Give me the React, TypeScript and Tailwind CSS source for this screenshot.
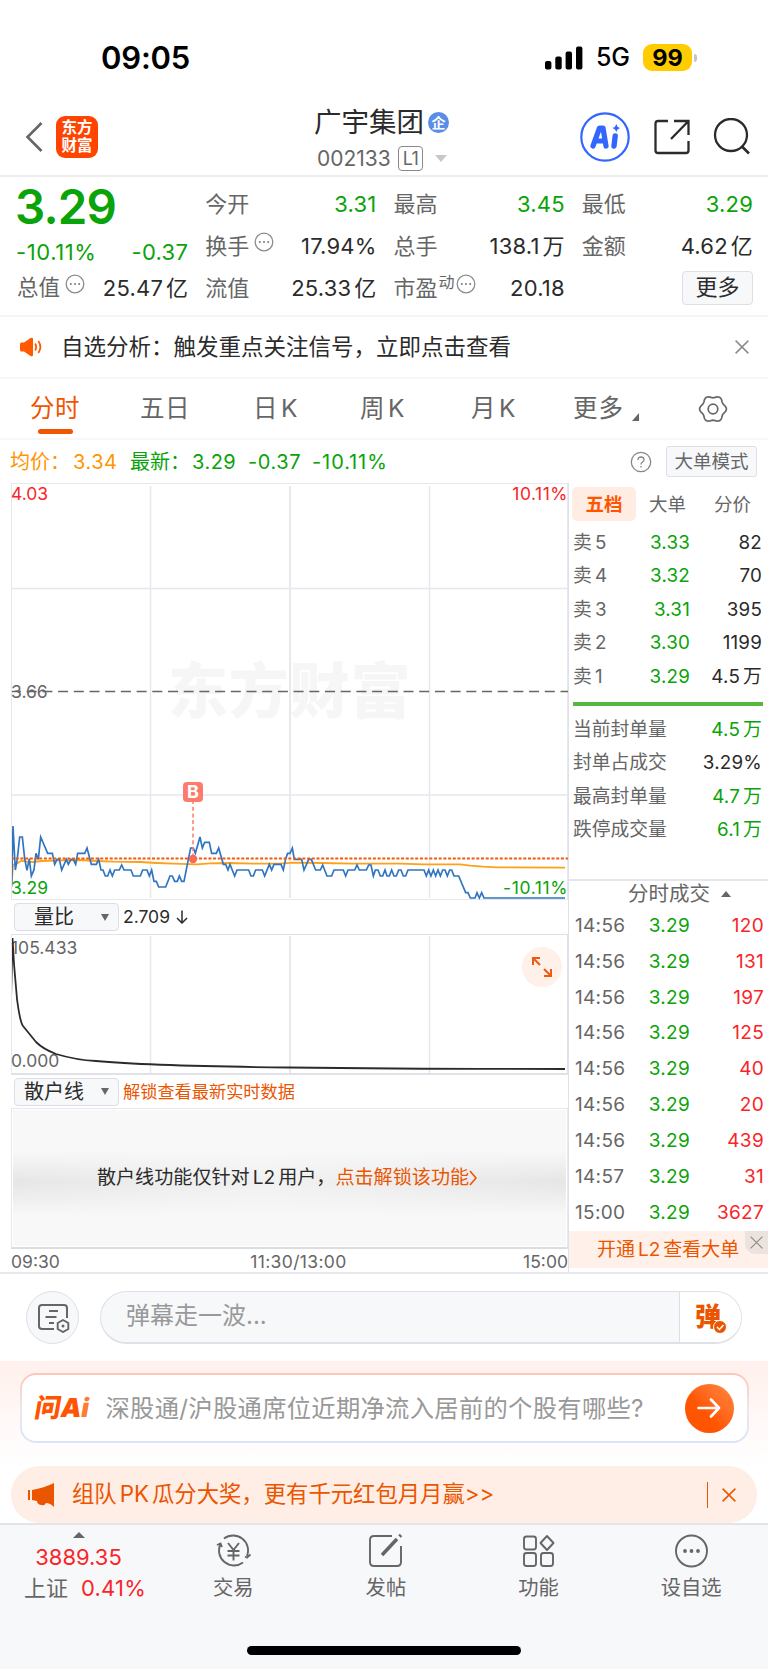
import React from 'react';
import clsx from 'clsx';

const GREEN = 'text-[#0aa30a]';
const RED = 'text-[#f92528]';

const asks = [
  { level: '5', price: '3.33', volume: '82' },
  { level: '4', price: '3.32', volume: '70' },
  { level: '3', price: '3.31', volume: '395' },
  { level: '2', price: '3.30', volume: '1199' },
  { level: '1', price: '3.29', volume: '4.5', unit: '万' },
];

const sealStats = [
  { label: '当前封单量', value: '4.5', unit: '万', green: true },
  { label: '封单占成交', value: '3.29%', green: false },
  { label: '最高封单量', value: '4.7', unit: '万', green: true },
  { label: '跌停成交量', value: '6.1', unit: '万', green: true },
];

const trades = [
  ['14:56', '120'],
  ['14:56', '131'],
  ['14:56', '197'],
  ['14:56', '125'],
  ['14:56', '40'],
  ['14:56', '20'],
  ['14:56', '439'],
  ['14:57', '31'],
  ['15:00', '3627'],
];

const pricePoints =
  '35,350 39,168 46,300 52,266 59,201 67,201 74,266 81,301 88,266 94,318 102,299 108,250 115,268 122,201 143,250 157,250 164,283 171,268 178,268 185,300 199,268 205,283 213,268 220,268 227,283 233,250 254,250 261,234 274,283 289,283 296,268 303,300 309,300 316,318 323,318 330,300 337,318 344,300 358,300 365,285 372,300 393,300 400,318 421,318 428,300 441,300 448,318 455,300 462,334 469,334 476,351 497,351 510,318 517,318 524,334 532,334 538,318 545,334 552,334 565,268 572,234 580,234 586,250 600,201 607,234 614,217 628,217 635,250 649,250 656,234 670,283 677,283 684,300 690,283 704,318 711,300 746,300 753,318 760,318 767,300 787,300 794,318 808,283 815,300 822,283 843,283 850,300 857,266 863,250 870,250 877,234 883,268 905,268 912,300 926,268 934,268 947,300 961,300 968,285 981,318 995,318 1002,300 1030,300 1037,318 1044,300 1064,300 1071,285 1078,300 1099,300 1106,285 1113,285 1120,318 1126,300 1134,300 1141,318 1148,318 1155,300 1161,318 1168,318 1175,300 1182,318 1189,318 1196,300 1203,300 1210,318 1217,318 1224,300 1272,300 1279,318 1286,300 1293,318 1300,300 1307,318 1314,300 1321,318 1328,300 1335,300 1342,318 1349,300 1355,300 1362,318 1376,318 1397,368 1404,368 1411,384 1425,384 1431,368 1438,384 1445,368 1452,384 1695,384';

const averagePoints =
  '35,340 39,285 50,281 58,276 66,272 80,275 100,276 125,273 180,271 240,270 290,273 340,275 420,276 470,279 520,281 590,283 630,280 690,279 760,281 840,281 880,278 960,279 1060,281 1200,281 1270,283 1380,283 1410,287 1450,290 1490,292 1695,293';

// six-lobed outline of the settings icon
const gearPoints = Array.from({ length: 72 }, (_, i) => {
  const angle = (i / 72) * Math.PI * 2;
  const radius = 12.3 + 1.1 * Math.cos(angle * 6);
  return `${(15 + radius * Math.cos(angle)).toFixed(2)},${(15 + radius * Math.sin(angle)).toFixed(2)}`;
}).join(' ');

const Dots: React.FC<{ className?: string }> = ({ className }) => (
  <svg viewBox="0 0 20 20" className={clsx('w-5 h-5', className)} fill="none">
    <circle cx="10" cy="10" r="8.8" stroke="#8c8c8c" strokeWidth="1.3" />
    <g fill="#777">
      <circle cx="5.8" cy="10" r="1" />
      <circle cx="10" cy="10" r="1" />
      <circle cx="14.2" cy="10" r="1" />
    </g>
  </svg>
);

const Cross: React.FC<{ className?: string; width?: number }> = ({ className, width = 1.5 }) => (
  <svg viewBox="0 0 14 14" className={className} fill="none" stroke="currentColor" strokeWidth={width}>
    <path d="M0.6 0.6 13.4 13.4M13.4 0.6 0.6 13.4" />
  </svg>
);

interface QuoteRowProps {
  label: React.ReactNode;
  value: string;
  unit?: string;
  green?: boolean;
}

const QuoteRow: React.FC<QuoteRowProps> = ({ label, value, unit, green }) => (
  <div className="flex h-[42px] items-center justify-between">
    <span className="flex items-center text-[#666]">{label}</span>
    <span className={clsx('flex items-center tracking-[0.2px]', green ? GREEN : 'text-[#2b2b2b]')}>
      {value}
      {unit && <span className="ml-[3px]">{unit}</span>}
    </span>
  </div>
);

const StatusBar = () => (
  <div className="flex h-[98px] items-center pt-[17px] pl-[101px] text-black">
    <span className="w-[444px] text-[31px] font-semibold tracking-[-0.2px]">09:05</span>
    <svg viewBox="0 0 38 24" className="h-6 w-[38px]">
      <rect x="0" y="15" width="6.4" height="8.5" rx="2" />
      <rect x="10.3" y="10.5" width="6.4" height="13" rx="2" />
      <rect x="20.6" y="5.5" width="6.4" height="18" rx="2" />
      <rect x="31" y="0.5" width="6.4" height="23" rx="2" />
    </svg>
    <span className="ml-[13px] w-[47px] text-[25px] font-medium tracking-[-0.1px]">5G</span>
    <span className="flex h-[27px] w-[49px] items-center justify-center rounded-[9px] bg-[#ffcc00] text-[23.5px] font-bold">
      99
    </span>
    <span className="ml-[2px] h-[8px] w-[2.5px] rounded-r bg-[#c4c4c4]" />
  </div>
);

const Header = () => (
  <header className="flex h-[79px] items-center border-b-2 border-[#ededed] pl-[25px]">
    <svg viewBox="0 0 18 30" className="h-[30px] w-[18px]" fill="none" stroke="#666" strokeWidth="2.6">
      <path d="M16.5 1 2.5 15 16.5 29" />
    </svg>
    <div className="ml-[13px] flex h-[42px] w-[42px] flex-col items-center justify-center rounded-[9px] bg-[#ff4400] text-[15.5px] leading-[17.5px] font-bold text-white">
      <span>东方</span>
      <span>财富</span>
    </div>
    <div className="ml-[216px] w-[141px] pt-[10px]">
      <div className="flex h-[34px] items-center text-[27.5px] text-[#2b2b2b]">
        广宇集团
        <span className="ml-[4px] flex h-[21px] w-[21px] items-center justify-center rounded-full bg-[#5b8de8] text-[14px] font-bold text-white">
          企
        </span>
      </div>
      <div className="flex h-[38px] items-center pl-[3px] text-[21px] text-[#666]">
        <span className="w-[81px]">002133</span>
        <span className="flex h-[25px] w-[25px] items-center justify-center rounded-[4px] border-[1.5px] border-[#888] text-[18px] tracking-[-0.5px]">
          L1
        </span>
        <svg viewBox="0 0 12 7" className="ml-[12px] h-[7px] w-3 shrink-0" fill="#c8c8c8">
          <path d="M0 0h12L6 7z" />
        </svg>
      </div>
    </div>
    <svg viewBox="0 0 50 50" className="ml-[125px] h-[50px] w-[50px]" fill="none">
      <circle cx="25" cy="25" r="23.7" stroke="#3366ff" strokeWidth="2.2" />
      <g stroke="#3366ff" strokeLinecap="round" strokeLinejoin="round">
        <path d="M13 34 19.5 16h3.5L26 34M15.5 29h9" strokeWidth="5.2" />
        <path d="M35.200 24 34 34" strokeWidth="5.4" />
      </g>
      <path d="M36.3 12Q37 15.3 40 16Q37 16.8 36.3 20Q35.6 16.8 32.6 16Q35.6 15.3 36.3 12Z" fill="#3366ff" />
    </svg>
    <svg viewBox="0 0 36 36" className="ml-[24px] h-9 w-9" fill="none" stroke="#2b2b2b" strokeWidth="2.3">
      <path d="M14 2H4Q1.5 2 1.5 4.5V31.5Q1.5 34 4 34H32Q34.5 34 34.5 31.5V22M20 2H34.5V16M34.5 2 17 20" />
    </svg>
    <svg viewBox="0 0 38 38" className="ml-[23px] h-[38px] w-[38px]" fill="none" stroke="#2b2b2b" strokeWidth="2.3">
      <circle cx="18" cy="17" r="16" />
      <path d="M29 28.5 36 35.5" strokeWidth="2.6" />
    </svg>
  </header>
);

const QuotePanel = () => (
  <section className="grid h-[140px] grid-cols-4 gap-[17px] border-b-2 border-[#f5f5f7] pt-[6px] pr-[15px] pl-[17px] text-[22px]">
    <div>
      <div className={clsx('-ml-[2px] flex h-[47px] items-center text-[47.5px] font-semibold tracking-[-0.8px]', GREEN)}>
        3.29
      </div>
      <div className={clsx('flex h-[44px] items-center justify-between', GREEN)}>
        <span className="-ml-[1px] tracking-[0.6px]">-10.11%</span>
        <span className="tracking-[0.3px]">-0.37</span>
      </div>
      <div className="flex h-[28px] items-center justify-between">
        <span className="flex items-center text-[21.5px] text-[#666]">
          总值
          <Dots className="mb-2 ml-[5px]" />
        </span>
        <span className="tracking-[0.2px] text-[#2b2b2b]">
          25.47<span className="ml-[3px]">亿</span>
        </span>
      </div>
    </div>
    <div>
      <QuoteRow label="今开" value="3.31" green />
      <QuoteRow label={<>换手<Dots className="mb-2 ml-[5px]" /></>} value="17.94%" />
      <QuoteRow label="流值" value="25.33" unit="亿" />
    </div>
    <div>
      <QuoteRow label="最高" value="3.45" green />
      <QuoteRow label="总手" value="138.1" unit="万" />
      <QuoteRow
        label={<>市盈<span className="mb-[13px] ml-[1px] text-[16px]">动</span><Dots className="mb-2 ml-[1px]" /></>}
        value="20.18"
      />
    </div>
    <div>
      <QuoteRow label="最低" value="3.29" green />
      <QuoteRow label="金额" value="4.62" unit="亿" />
      <div className="flex h-[42px] items-center justify-end">
        <button className="h-[34px] w-[71px] rounded-[4px] border border-[#dddfe6] bg-[#f7f8fa] pb-[2px] leading-none text-[#2b2b2b]">
          更多
        </button>
      </div>
    </div>
  </section>
);

const Notice = () => (
  <div className="flex h-[62px] items-center border-b-2 border-[#f7f7f9] pr-[19px] pl-[19px]">
    <svg viewBox="0 0 24 20" className="h-5 w-6" fill="none">
      <path d="M1 7Q1 5.5 2.5 5.5H5L11.5 1Q14 0 14 2V18Q14 20 11.5 19L5 14.5H2.5Q1 14.5 1 13Z" fill="#ff5a00" />
      <path d="M16.2 6.5Q18 10 16.2 13.5M19.3 4Q23.5 10 19.3 16" stroke="#ff5a00" strokeWidth="1.8" />
    </svg>
    <span className="ml-[18px] text-[22.5px] text-[#2b2b2b]">自选分析：触发重点关注信号，立即点击查看</span>
    <Cross className="ml-auto h-[14px] w-[14px] text-[#8c8c8c]" />
  </div>
);

const PeriodTabs = () => (
  <nav className="flex h-[61px] items-center border-b-2 border-[#f7f7f9] pl-[30px] text-[24.5px] tracking-[0.4px] text-[#666]">
    <div className="relative w-[110px] text-[#f05500]">
      分时
      <span className="absolute -bottom-[13px] left-[8px] h-[5px] w-[35px] rounded-full bg-[#f05500]" />
    </div>
    <span className="w-[113px]">五日</span>
    <span className="w-[107px]">日<span className="ml-[3px]">K</span></span>
    <span className="w-[111px]">周<span className="ml-[3px]">K</span></span>
    <span className="w-[102px]">月<span className="ml-[3px]">K</span></span>
    <span className="w-[59px] tracking-[1px]">更多</span>
    <svg viewBox="0 0 8 8" className="mt-4 h-2 w-2" fill="#666">
      <path d="M7 0V8H0Z" />
    </svg>
    <svg viewBox="0 0 30 30" className="ml-[58px] h-[30px] w-[30px]" fill="none" stroke="#666" strokeWidth="1.7">
      <polygon points={gearPoints} strokeLinejoin="round" />
      <circle cx="15" cy="15" r="4.8" />
    </svg>
  </nav>
);

const PriceSummary = () => (
  <div className="flex h-[43px] items-center pr-[11px] pl-[10px] text-[20px]">
    <span className="w-[63px] text-[#ff9500]">均价：</span>
    <span className="w-[57px] tracking-[0.5px] text-[#ff9500]">3.34</span>
    <span className={clsx('w-[62px]', GREEN)}>最新：</span>
    <span className={clsx('w-[56px] tracking-[0.5px]', GREEN)}>3.29</span>
    <span className={clsx('w-[64px] tracking-[0.6px]', GREEN)}>-0.37</span>
    <span className={clsx('tracking-[0.9px]', GREEN)}>-10.11%</span>
    <svg viewBox="0 0 22 22" className="ml-auto h-[22px] w-[22px]" fill="none" stroke="#888" strokeWidth="1.3">
      <circle cx="11" cy="11" r="9.7" />
      <path d="M8 9Q8 6 11 6Q14 6 14 8.7Q14 10 12.500 11Q11 12 11 13.5M11 15V16.500" />
    </svg>
    <span className="ml-[14px] flex h-[31px] w-[91px] items-center justify-center rounded-[3px] border border-[#dddfe6] bg-[#f7f8fa] text-[18.5px] text-[#666]">
      大单模式
    </span>
  </div>
);

const PriceChart = () => (
  <div className="relative h-[417px] border border-[#e6e8ee] text-[17.5px]">
    <div className="absolute top-[177px] left-[156px] text-[60px] font-black tracking-[0.8px] whitespace-nowrap text-[#f6f6f6]">
      东方财富
    </div>
    <svg viewBox="1 1 557 417" className="absolute inset-0 h-[417px] w-[557px]" fill="none">
      <g stroke="#e6e8ee" strokeWidth="1.5">
        <path d="M139.5 3V415M418.5 3V415M0 105.5H557M0 312H557" />
        <path d="M279 3V415" strokeWidth="2" />
      </g>
      <path d="M0 208.500H557" stroke="#666" strokeWidth="1.5" strokeDasharray="10 5.700" />
      <g transform="translate(-11 287) scale(0.33333)">
        <polyline points={averagePoints} stroke="#ff9f1a" strokeWidth="5.5" />
        <polyline points={pricePoints} stroke="#2f74c0" strokeWidth="5" />
      </g>
      <path d="M0 375.500H557" stroke="#f25a0a" strokeWidth="1.8" strokeDasharray="3 1.700" />
      <path d="M182 317V372" stroke="#fb7b6d" strokeWidth="1.5" strokeDasharray="4 2.700" />
      <circle cx="182" cy="376" r="4.2" fill="#fb6a55" />
    </svg>
    <span className={clsx('absolute top-[1px] -left-[1px]', RED)}>4.03</span>
    <span className={clsx('absolute top-[1px] -right-[1px] tracking-[0.5px]', RED)}>10.11%</span>
    <span className="absolute top-[199px] -left-[1px] text-[#666]">3.66</span>
    <span className={clsx('absolute top-[395px] -left-[1px]', GREEN)}>3.29</span>
    <span className={clsx('absolute top-[395px] -right-[1px] tracking-[0.6px]', GREEN)}>-10.11%</span>
    <span className="absolute top-[298px] left-[171px] flex h-5 w-5 items-center justify-center rounded-[4px] bg-[#fb7b6d] text-[18px] font-bold text-white">
      B
    </span>
  </div>
);

const IndicatorSelect: React.FC<{ name: string }> = ({ name }) => (
  <div className="mr-[4px] ml-[3px] flex h-[28px] w-[105px] items-center rounded-[4px] border border-[#dddfe6] bg-[#f7f8fa] text-[20px] text-[#2b2b2b]">
    <span className="w-[78px] text-center">{name}</span>
    <svg viewBox="0 0 8 7" className="ml-[8px] h-[7px] w-2" fill="#666">
      <path d="M0 0h8L4 7z" />
    </svg>
  </div>
);

const VolumeRatio = () => (
  <>
    <div className="flex h-[34px] items-center text-[17.5px] text-[#2b2b2b]">
      <IndicatorSelect name="量比" />
      <span className="w-[53px]">2.709</span>
      <svg viewBox="0 0 12 14" className="h-[14px] w-3" fill="none" stroke="#2b2b2b" strokeWidth="1.5">
        <path d="M6 0.5V13M1 8 6 13 11 8" />
      </svg>
    </div>
    <div className="relative h-[141px] border border-b-2 border-[#e0e2e8] border-l-[#e6e8ee] text-[17.5px] text-[#666]">
      <span className="absolute top-[4px] -left-[1px]">105.433</span>
      <span className="absolute top-[117px] -left-[1px]">0.000</span>
      <svg viewBox="1 1 557 140" className="absolute inset-0 h-[140px] w-[557px]" fill="none">
        <g stroke="#e6e8ee" strokeWidth="1.5">
          <path d="M139.5 2V139M418.5 2V139" />
          <path d="M279 2V139" strokeWidth="2" />
        </g>
        <path
          d="M0 66 1.5 4 3 30 6 65Q9 88 12 92L25 108Q32 115 45 120Q65 126 85 127Q140 132 278 133.5Q400 135 554 135"
          stroke="#2b2b2b"
          strokeWidth="1.8"
        />
      </svg>
      <span className="absolute top-[12px] right-[5px] flex h-[40px] w-[40px] items-center justify-center rounded-full bg-[#fff0e9]">
        <svg viewBox="0 0 22 22" className="h-[22px] w-[22px]" fill="none" stroke="#f05a10" strokeWidth="2">
          <path d="M2 9V2H9M2 2 9 9M20 13V20H13M20 20 13 13" />
        </svg>
      </span>
    </div>
  </>
);

const RetailLine = () => (
  <>
    <div className="flex h-[33px] items-center">
      <IndicatorSelect name="散户线" />
      <span className="text-[17.2px] text-[#eb5500]">解锁查看最新实时数据</span>
    </div>
    <div className="h-[141px] border border-b-2 border-[#e6e8ee] border-b-[#dadde4] p-[1px]">
      <div className="h-full bg-linear-to-b from-[#f8f8f8] from-30% via-[#e6e6e6] via-53% to-[#f8f8f8] to-78%">
        <div className="flex h-full items-center justify-center bg-linear-to-r from-transparent via-[#f8f8f8]/60 via-45% to-transparent pr-[5px] text-[19.1px] text-[#2b2b2b]">
          散户线功能仅针对<span className="mx-[3px]">L2</span>用户，
          <span className="text-[#eb5500]">点击解锁该功能</span>
          <svg viewBox="0 0 8 16" className="h-4 w-2" fill="none" stroke="#eb5500" strokeWidth="1.6">
            <path d="M1 1 7 8 1 15" />
          </svg>
        </div>
      </div>
    </div>
    <div className="flex h-[25px] items-center justify-between pt-[1px] text-[17.5px] text-[#666]">
      <span>09:30</span>
      <span className="ml-[14px] tracking-[0.35px]">11:30/13:00</span>
      <span>15:00</span>
    </div>
  </>
);

const OrderBook = () => (
  <aside className="flex w-[200px] flex-col border-l border-[#e0e2e8] text-[18.8px]">
    <div className="mb-[1.5px] flex h-[42px] items-center pl-[3px] text-[18.5px] text-[#666]">
      <span className="flex h-[34px] w-[64px] items-center justify-center rounded-[5px] bg-[#ffece3] font-bold text-[#ff5500]">
        五档
      </span>
      <span className="ml-[13px] w-[65px]">大单</span>
      <span>分价</span>
    </div>
    {asks.map((ask) => (
      <div key={ask.level} className="flex h-[33.5px] items-center pr-[6px] pl-[4px] tracking-[0.2px]">
        <span className="w-[56px] text-[#666]">
          卖<span className="ml-[3px]">{ask.level}</span>
        </span>
        <span className={clsx('w-[61px] text-right', GREEN)}>{ask.price}</span>
        <span className="ml-auto text-[#2b2b2b]">
          {ask.volume}
          {ask.unit && <span className="ml-[3px]">{ask.unit}</span>}
        </span>
      </div>
    ))}
    <div className="mt-[7.5px] mr-[5px] mb-[8px] ml-[4px] h-[4px] shrink-0 bg-[#55b83c]" />
    {sealStats.map((stat) => (
      <div key={stat.label} className="flex h-[33.5px] items-center justify-between pr-[6px] pl-[4px]">
        <span className="text-[#666]">{stat.label}</span>
        <span className={clsx('tracking-[0.2px]', stat.green ? GREEN : 'text-[#2b2b2b]')}>
          {stat.value}
          {stat.unit && <span className="ml-[3px]">{stat.unit}</span>}
        </span>
      </div>
    ))}
    <div className="mt-[31px] flex h-[29px] items-center border-t-2 border-[#e4e6eb] pl-[59px] text-[20.5px] text-[#666]">
      分时成交
      <svg viewBox="0 0 10 6" className="ml-[11px] h-[6px] w-[10px]" fill="#666">
        <path d="M0 6h10L5 0z" />
      </svg>
    </div>
    {trades.map(([time, volume], index) => (
      <div key={index} className="flex h-[35.85px] items-center pr-[4px] pl-[6px] text-[19px] tracking-[0.3px]">
        <span className="w-[54px] text-[#666]">{time}</span>
        <span className={clsx('w-[61px] text-right', GREEN)}>3.29</span>
        <span className={clsx('ml-auto', RED)}>{volume}</span>
      </div>
    ))}
    <div className="relative mt-[1px] flex h-[37px] items-center bg-[#fff0e9] pl-[28px] text-[19px] text-[#eb5500]">
      开通<span className="mx-[3px]">L2</span>查看大单
      <span className="absolute top-0 right-0 flex h-[23px] w-[23px] items-center justify-center rounded-bl-[10px] bg-[#ece3df]">
        <Cross className="h-[13px] w-[13px] text-[#8c8c8c]" width={1.3} />
      </span>
    </div>
  </aside>
);

const CommentBar = () => (
  <div className="flex h-[87px] items-center pl-[26px]">
    <div className="flex h-[53px] w-[53px] items-center justify-center rounded-full border border-[#dddfe6] bg-[#f7f8fa]">
      <svg viewBox="0 0 34 30" className="h-[30px] w-[34px]" fill="none" stroke="#666" strokeWidth="2">
        <path d="M18 26H6Q3 26 3 23V5Q3 2 6 2H28Q31 2 31 5V15M13 8H22M9.500 14H20.500M13 20H18" />
        <path d="M27 17 32.300 20V26L27 29 21.700 26V20Z" strokeWidth="1.900" />
        <circle cx="27" cy="23" r="1.500" fill="#666" stroke="none" />
      </svg>
    </div>
    <div className="ml-[21px] flex h-[53px] w-[642px] items-center overflow-hidden rounded-full border border-b-2 border-[#dfe1e8] bg-[#f7f8fa]">
      <span className="mb-[3px] ml-[25px] text-[24px] text-[#999]">弹幕走一波...</span>
      <div className="relative ml-auto h-full w-[62px] border-l border-[#dddfe6] bg-white pt-[12px] pl-[15px]">
        <span className="text-[26px] leading-none font-black text-[#eb5500]">弹</span>
        <svg viewBox="0 0 14 14" className="absolute top-[28px] left-[33px] h-[14px] w-[14px]" fill="none">
          <circle cx="7" cy="7" r="6.5" fill="#eb5500" stroke="#fff" />
          <path d="M4 7 6.5 9.5 10.5 5" stroke="#fff" strokeWidth="1.5" />
        </svg>
      </div>
    </div>
  </div>
);

const AskAi = () => (
  <div className="h-[105px] bg-linear-to-b from-[#fff0ec] to-white px-[19.5px] pt-[12px]">
    <div className="rounded-[16px] bg-linear-to-b from-[#ffc4b8] via-[#eee6f0] to-[#dbe4fa] p-[2px]">
      <div className="flex h-[66px] items-center rounded-[14px] bg-white pl-[13px]">
        <span className="w-[71px] -skew-x-10 text-[26px] font-black whitespace-nowrap text-[#ff5500]">
          问A<span className="text-[#ff7a33]">i</span>
        </span>
        <span className="text-[24.3px] tracking-[0.3px] text-[#999]">深股通/沪股通席位近期净流入居前的个股有哪些?</span>
        <span className="mr-[13px] ml-auto flex h-[49px] w-[49px] items-center justify-center rounded-full bg-linear-to-bl from-[#ff8a3c] to-[#ff5500] to-60%">
          <svg viewBox="0 0 24 20" className="h-5 w-6" fill="none" stroke="#fff" strokeWidth="2.6" strokeLinecap="round" strokeLinejoin="round">
            <path d="M1.5 10H22M14 1.5 22 10 14 18.5" />
          </svg>
        </span>
      </div>
    </div>
  </div>
);

const Promo = () => (
  <div className="mx-[11px] flex h-[57px] items-center rounded-full bg-[#ffeee5] pl-[17px] text-[22.35px] text-[#eb5500]">
    <svg viewBox="0 0 27 24" className="h-6 w-[27px]" fill="#eb5500">
      <path d="M0 7H2V17H0ZM4 7Q16 5 26 0V24Q22 20 18 20Q17 23 13 22Q9 21 9 18L4 17Z" />
    </svg>
    <span className="ml-[17px]">组队<span className="mx-[3px]">PK</span>瓜分大奖，更有千元红包月月赢&gt;&gt;</span>
    <span className="ml-auto h-[26px] w-[1.5px] bg-[#eb5500]" />
    <Cross className="mr-[21px] ml-[14px] h-[14px] w-[14px]" />
  </div>
);

const icons = {
  trade: (
    <>
      <path d="M8 4.5A15 15 0 0 1 31 22M27 28.5A15 15 0 0 1 4.5 10M1 11 4.5 9.5 6 13M29 22.5 31 23.5 34.5 20.5" />
      <path d="M12 9 17.5 16 23 9M17.5 16V26.5M11.5 17H23.5M11.5 21.5H23.5" />
    </>
  ),
  post: (
    <>
      <path d="M24 2H6Q2 2 2 6V28Q2 32 6 32H29Q33 32 33 28V12" />
      <path d="M14 21 29 5M31.5 2.5 33 1" strokeWidth="3.5" />
    </>
  ),
  features: (
    <>
      <rect x="3" y="2.5" width="12" height="13" rx="2.5" />
      <rect x="3" y="19" width="12" height="13" rx="2.5" />
      <rect x="20" y="19" width="12" height="13" rx="2.5" />
      <path d="M26 2 32.5 9 26 16 19.5 9Z" strokeLinejoin="round" />
    </>
  ),
  favorite: (
    <>
      <circle cx="17.5" cy="17" r="15.5" />
      <g fill="#666" stroke="none">
        <circle cx="11" cy="17" r="1.9" />
        <circle cx="17.5" cy="17" r="1.9" />
        <circle cx="24" cy="17" r="1.9" />
      </g>
    </>
  ),
};

const NavItem: React.FC<{ icon: React.ReactNode; label: string }> = ({ icon, label }) => (
  <div className="flex w-[152.6px] flex-col items-center text-[#666]">
    <svg viewBox="0 0 35 34" className="mt-[9px] h-[34px] w-[35px]" fill="none" stroke="#666" strokeWidth="1.9">
      {icon}
    </svg>
    <span className="mt-[10px] text-[20.3px]">{label}</span>
  </div>
);

const BottomNav = () => (
  <footer className="h-[147px] border-t-2 border-[#e3e4e8] bg-[#f7f8fa]">
    <div className="flex h-[121px]">
      <div className={clsx('flex w-[157px] flex-col items-center text-[22px]', RED)}>
        <svg viewBox="0 0 12 6" className="mt-[7px] h-[6px] w-3" fill="#666">
          <path d="M0 6h12L6 0z" />
        </svg>
        <span className="mt-[8px]">3889.35</span>
        <span className="mt-[9px] ml-[13px] flex gap-[13px]">
          <span className="text-[#666]">上证</span>
          <span className="tracking-[0.2px]">0.41%</span>
        </span>
      </div>
      <NavItem icon={icons.trade} label="交易" />
      <NavItem icon={icons.post} label="发帖" />
      <NavItem icon={icons.features} label="功能" />
      <NavItem icon={icons.favorite} label="设自选" />
    </div>
    <div className="mx-auto h-[9px] w-[274px] rounded-full bg-black" />
  </footer>
);

const App = () => (
  <div className="h-[1669px] w-[768px] overflow-hidden bg-white font-['Inter','Noto_Sans_CJK_SC',sans-serif] leading-none">
    <StatusBar />
    <Header />
    <QuotePanel />
    <Notice />
    <PeriodTabs />
    <PriceSummary />
    <div className="flex h-[791px] border-b-2 border-[#e6e8ee] pl-[11px]">
      <div className="w-[557px]">
        <PriceChart />
        <VolumeRatio />
        <RetailLine />
      </div>
      <OrderBook />
    </div>
    <CommentBar />
    <AskAi />
    <Promo />
    <BottomNav />
  </div>
);

export default App;
